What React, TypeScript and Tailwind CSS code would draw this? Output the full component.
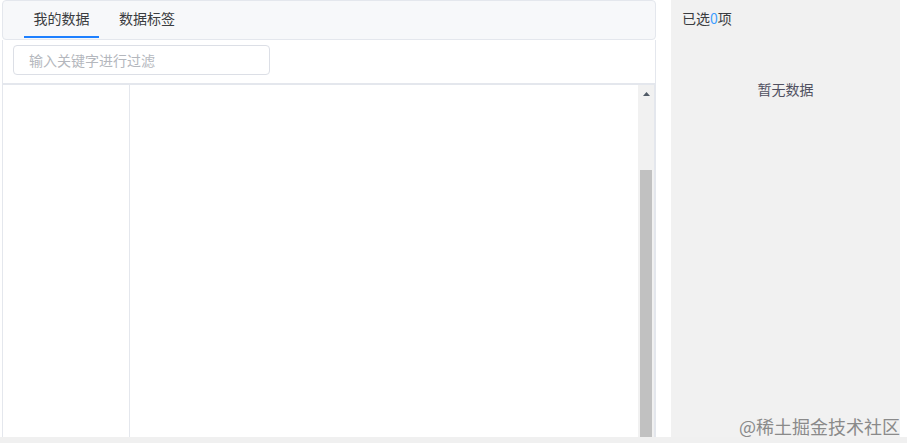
import React from "react";

const font = { fontFamily: '"Microsoft YaHei", "Noto Sans CJK SC", "Liberation Sans", sans-serif' };

export default function App() {
  return (
    <div className="w-[907px] h-[443px] bg-white flex flex-col overflow-hidden" style={font}>
      <div className="flex h-[437px]">
        <div className="ml-[2px] w-[654px] flex flex-col">
          <div className="h-[40px] bg-[#f7f8fa] border border-[#e4e7ed] rounded-[4px] flex items-end pl-[21px] gap-[20px]">
            <div className="w-[75px] h-full flex flex-col items-center justify-end">
              <span className="text-[14px] leading-[20px] text-[#3a3c40] mb-[8px]">我的数据</span>
              <div className="h-[2px] w-full bg-[#1e80ff] mb-[1px]"></div>
            </div>
            <div className="h-full flex flex-col items-center justify-end">
              <span className="text-[14px] leading-[20px] text-[#3a3c40] mb-[11px]">数据标签</span>
            </div>
          </div>
          <div className="h-[45px] border-x border-b-2 border-[#e4e7ed] pl-[10px] pt-[5px]">
            <div className="w-[257px] h-[30px] border border-[#dcdfe6] rounded-[4px] flex items-center pl-[15px]">
              <span className="text-[14px] text-[#b4b7bd]">输入关键字进行过滤</span>
            </div>
          </div>
          <div className="flex-1 flex border-l border-[#e4e7ed]">
            <div className="w-[127px] border-r border-[#e4e7ed]"></div>
            <div className="flex-1"></div>
            <div className="w-[16px] bg-[#f1f1f1] flex flex-col items-center">
              <svg width="9" height="6" viewBox="0 0 9 6" className="mt-[6px]">
                <polygon points="4.5,1 8,5 1,5" fill="#505a66" />
              </svg>
              <div className="mt-[73px] w-[12px] flex-1 bg-[#c1c1c1]"></div>
            </div>
            <div className="w-[2px] bg-[#e4e7ed]"></div>
          </div>
        </div>
        <div className="ml-[15px] w-[229px] bg-[#f1f1f1] flex flex-col relative">
          <div className="pl-[11px] pt-[9px] text-[14px] leading-[18px] text-[#3a3c40]">
            已选<span className="text-[#409eff]">0</span>项
          </div>
          <div className="mt-[53px] text-center text-[14px] leading-[18px] text-[#505060]">暂无数据</div>
          <div
            className="absolute right-0 bottom-[1px] text-[18px] leading-[20px] text-[#8a8a8a] whitespace-nowrap"
            style={{ fontFamily: '"Noto Sans CJK SC", sans-serif' }}
          >
            @稀土掘金技术社区
          </div>
        </div>
      </div>
      <div className="h-[6px] bg-[#f0f0f0]"></div>
    </div>
  );
}
